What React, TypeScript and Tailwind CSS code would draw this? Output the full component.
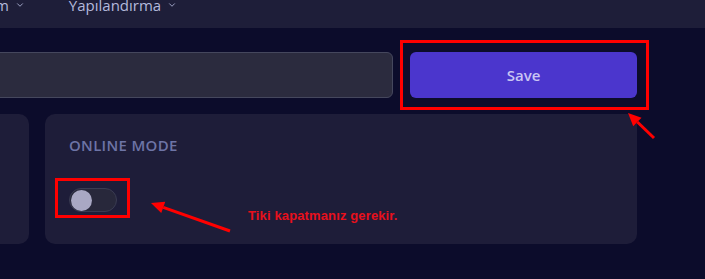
import { ChevronDown } from "lucide-react";

function Arrow({ x1, y1, x2, y2 }: { x1: number; y1: number; x2: number; y2: number }) {
  // tail (x1,y1) -> tip (x2,y2)
  const a = Math.atan2(y2 - y1, x2 - x1);
  const len = 13;
  const w = 6;
  const bx = x2 - len * Math.cos(a);
  const by = y2 - len * Math.sin(a);
  const p1 = `${bx + w * Math.sin(a)},${by - w * Math.cos(a)}`;
  const p2 = `${bx - w * Math.sin(a)},${by + w * Math.cos(a)}`;
  return (
    <g>
      <line x1={x1} y1={y1} x2={bx} y2={by} stroke="#f00" strokeWidth={3} />
      <polygon points={`${x2},${y2} ${p1} ${p2}`} fill="#f00" />
    </g>
  );
}

export default function App() {
  return (
    <div className="relative w-[705px] h-[279px] overflow-hidden bg-[#0c0c2b] font-['Open_Sans','Noto_Sans',sans-serif]">
      {/* Top nav */}
      <div className="h-[28px] bg-[#1e1e39] flex items-start text-[15px] leading-[20px] text-[#b3b9dc]">
        <div className="flex items-center gap-[6px] ml-[-38px] mt-[-5px]">
          <span>Sistem</span>
          <ChevronDown className="w-[10px] h-[10px]" strokeWidth={2} />
        </div>
        <div className="flex items-center gap-[6px] ml-[44px] mt-[-5px]">
          <span>Yapılandırma</span>
          <ChevronDown className="w-[10px] h-[10px]" strokeWidth={2} />
        </div>
      </div>

      {/* Content */}
      <div className="pt-[24px] pr-[68px] ml-[-140px]">
        <div className="flex gap-[17px]">
          <div className="flex-1 h-[46px] rounded-[6px] bg-[#2b2b3e] border border-[#45475d]" />
          <button className="w-[227px] h-[46px] rounded-[6px] bg-[#4b36cd] text-[#c9c5f3] text-[15px] font-semibold">
            Save
          </button>
        </div>

        <div className="flex gap-[16px] mt-[16px]">
          <div className="w-[169px] h-[130px] rounded-[10px] bg-[#1e1d39]" />
          <div className="flex-1 h-[130px] rounded-[10px] bg-[#1e1d39] px-[24px] pt-[21px]">
            <div className="text-[15px] leading-[20px] font-semibold tracking-[0.02em] text-[#6d74a6]">
              ONLINE MODE
            </div>
            <div className="mt-[33px] w-[48px] h-[24px] rounded-full bg-[#28283b] border border-[#3a3b52] flex items-center px-[1px]">
              <div className="w-[21px] h-[21px] rounded-full bg-[#a9a8c4]" />
            </div>
          </div>
        </div>
      </div>

      {/* Annotations */}
      <div className="absolute left-[400px] top-[40px] w-[249px] h-[70px] border-[3px] border-[#ff0000]" />
      <div className="absolute left-[55px] top-[178px] w-[75px] h-[40px] border-[3px] border-[#ff0000]" />
      <svg className="absolute inset-0 pointer-events-none" width={705} height={279}>
        <Arrow x1={230} y1={231} x2={151} y2={203} />
        <Arrow x1={654} y1={138} x2={628} y2={113} />
      </svg>
      <div className="absolute left-[248px] top-[207px] text-[13px] leading-[18px] font-bold tracking-[0.01em] text-[#e8101c] font-['Liberation_Sans','DejaVu_Sans',sans-serif]">
        Tiki kapatmanız gerekir.
      </div>
    </div>
  );
}
